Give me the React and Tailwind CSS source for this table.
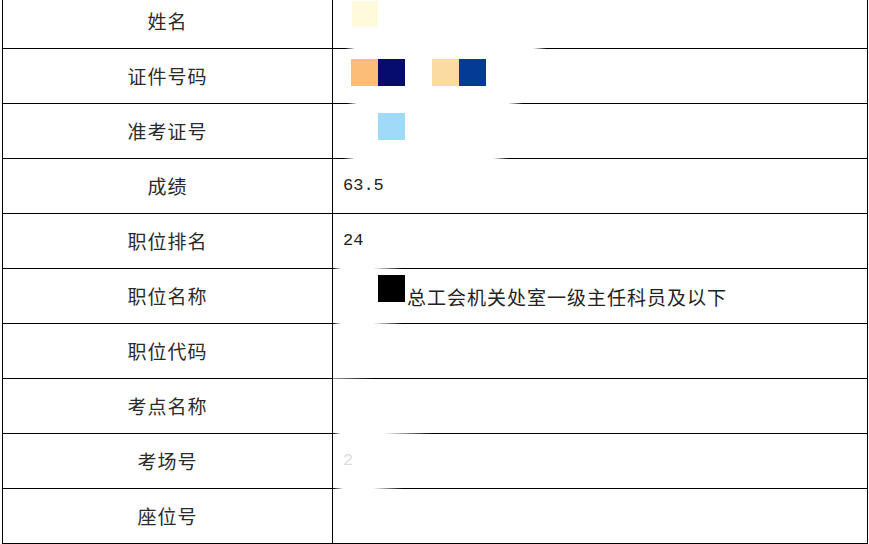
import React from 'react';

// table rows, each 55px pitch (54px body + 1px rule)
const rows = [
    { label: '姓名', kind: 'name', rule: 'bg-[linear-gradient(to_right,#000_0px,#000_12px,transparent_22px,transparent_200px,#000_214px)]' },
    { label: '证件号码', kind: 'id', rule: 'bg-[linear-gradient(to_right,#000_0px,#000_14px,transparent_24px,transparent_175px,#000_190px)]' },
    { label: '准考证号', kind: 'ticket', rule: 'bg-[linear-gradient(to_right,#000_0px,#000_10px,transparent_22px,transparent_160px,#000_176px)]' },
    { label: '成绩', kind: 'text', value: '63.5', rule: 'bg-black' },
    { label: '职位排名', kind: 'text', value: '24', rule: 'bg-[linear-gradient(to_right,#000_0px,transparent_8px,transparent_40px,#000_70px)]' },
    { label: '职位名称', kind: 'post', rule: 'bg-[linear-gradient(to_right,#000_0px,transparent_8px,transparent_40px,#000_70px)]' },
    { label: '职位代码', kind: 'empty', rule: 'bg-[linear-gradient(to_right,#999_0px,#000_40px)]' },
    { label: '考点名称', kind: 'empty', rule: 'bg-[linear-gradient(to_right,#000_0px,transparent_8px,transparent_50px,#000_100px)]' },
    { label: '考场号', kind: 'faint', value: '2', rule: 'bg-[linear-gradient(to_right,#000_0px,transparent_10px,transparent_40px,#000_70px)]' },
    { label: '座位号', kind: 'empty', rule: 'bg-black' },
];

const Cell = ({ row }) => {
    if (row.kind === 'name') {
        return (
            <div className="flex items-center h-full pl-[19px] pb-[14px]">
                <span className="w-[26px] h-[26px] bg-[#fdfbdc]"></span>
            </div>
        );
    }
    if (row.kind === 'id') {
        return (
            <div className="flex items-center h-full pl-[18px] pb-[8px]">
                <span className="w-[27px] h-[27px] bg-[#fbbd78]"></span>
                <span className="w-[27px] h-[27px] bg-[#050c6c]"></span>
                <span className="w-[27px] h-[27px] ml-[27px] bg-[#fcdba2]"></span>
                <span className="w-[27px] h-[27px] bg-[#033b95]"></span>
            </div>
        );
    }
    if (row.kind === 'ticket') {
        return (
            <div className="flex items-center h-full pl-[45px] pb-[10px]">
                <span className="w-[27px] h-[27px] bg-[#9fdbf8]"></span>
            </div>
        );
    }
    if (row.kind === 'post') {
        return (
            <div className="flex items-center h-full pl-[45px]">
                <span className="w-[27px] h-[27px] bg-black -mt-[16px]"></span>
                <span className="ml-[2px] text-[19px] tracking-[1px] text-[#222] leading-none">总工会机关处室一级主任科员及以下</span>
            </div>
        );
    }
    if (row.kind === 'text') {
        return (
            <div className="flex items-center h-full pl-[10px]">
                <span className="font-['Liberation_Mono',monospace] text-[17px] text-[#222]">{row.value}</span>
            </div>
        );
    }
    if (row.kind === 'faint') {
        return (
            <div className="flex items-center h-full pl-[10px]">
                <span className="font-['Liberation_Mono',monospace] text-[17px] text-[#dcdcdc]">{row.value}</span>
            </div>
        );
    }
    return <div className="h-full"></div>;
};

export default function App() {
    return (
        <div className="w-[869px] h-[544px] overflow-hidden bg-white font-['Noto_Sans_CJK_SC','Noto_Sans',sans-serif]">
            <div className="ml-[2px] w-[866px] -mt-[6px] border-l border-r border-black">
                {rows.map((row) => (
                    <div key={row.label} className="flex">
                        <div className="w-[330px] shrink-0 border-r border-black flex flex-col">
                            <div className="h-[54px] flex items-center justify-center text-[19px] tracking-[1px] text-[#2a2a2a]">
                                {row.label}
                            </div>
                            <div className="h-px bg-black"></div>
                        </div>
                        <div className="flex-1 flex flex-col">
                            <div className="h-[54px]">
                                <Cell row={row} />
                            </div>
                            <div className={`h-px ${row.rule}`}></div>
                        </div>
                    </div>
                ))}
            </div>
        </div>
    );
}
